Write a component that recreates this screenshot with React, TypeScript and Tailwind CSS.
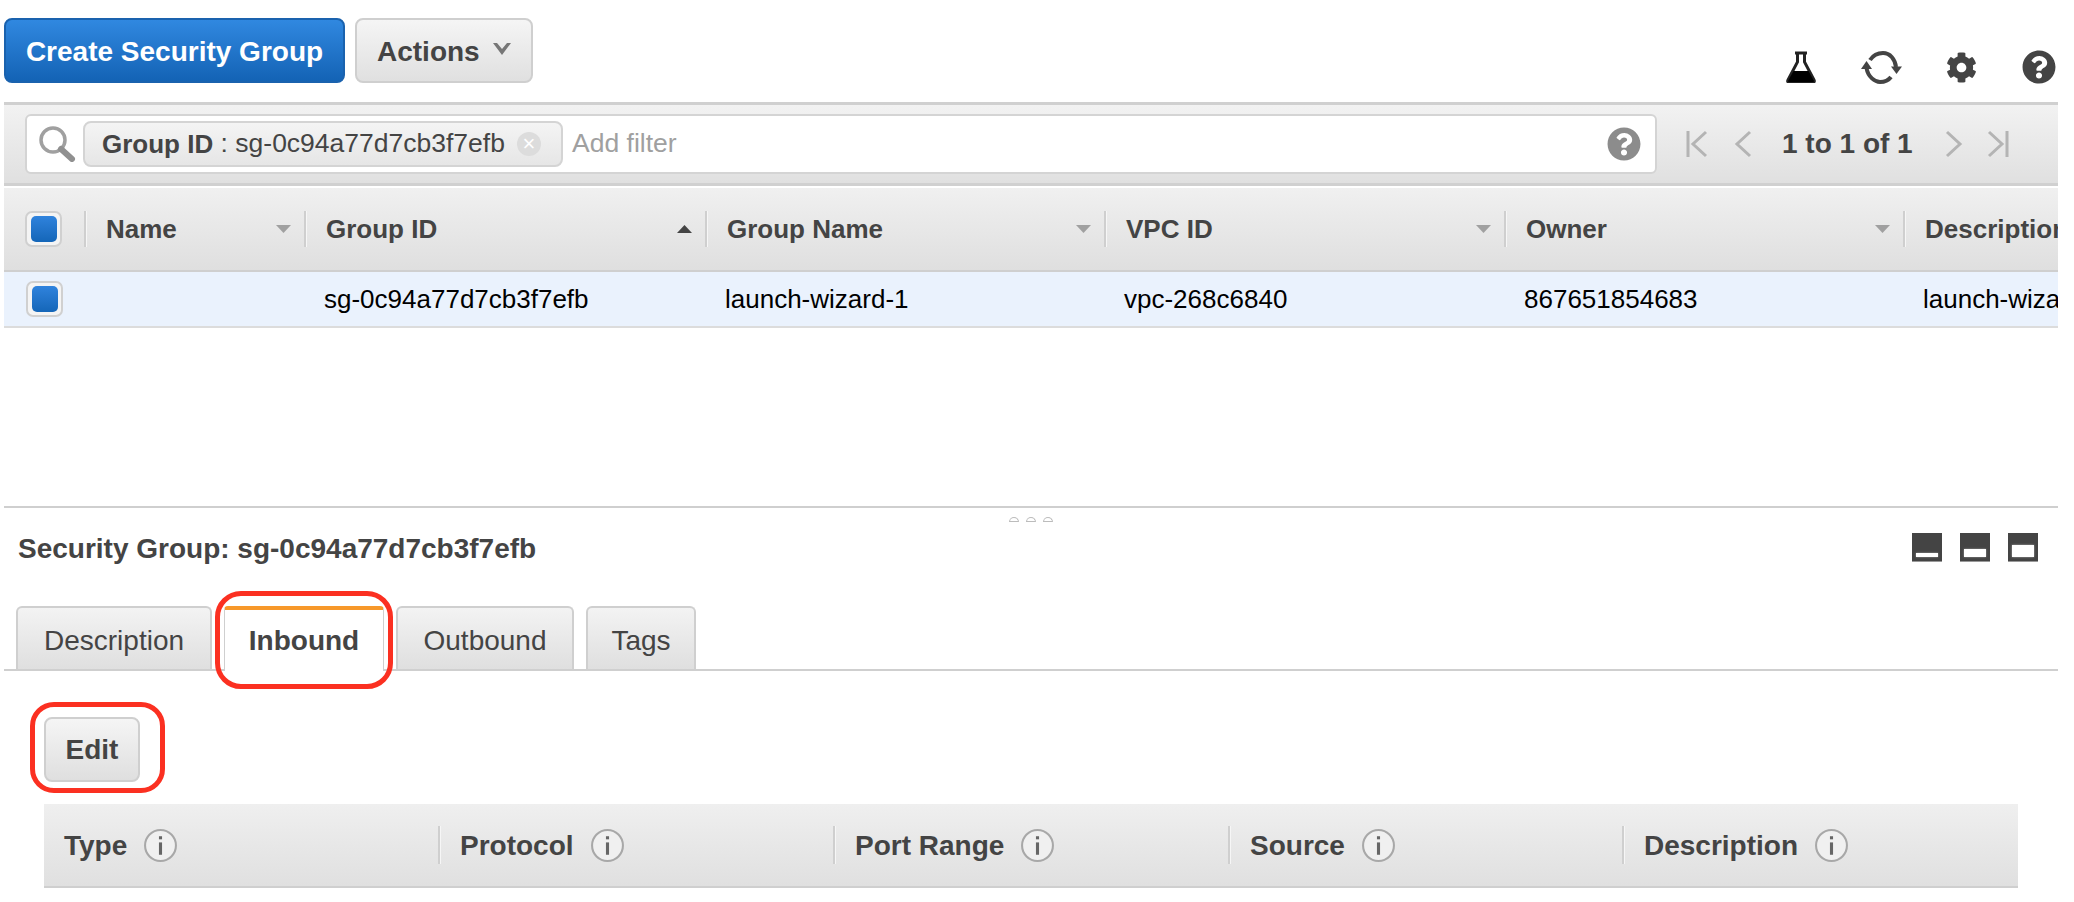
import { FaCog, FaQuestionCircle } from "react-icons/fa";

const mainCols = "grid grid-cols-[80px_220px_401px_399px_400px_399px_155px]";
const ruleCols = "grid grid-cols-[394px_395px_395px_394px_396px]";

const Check = () => (
  <span className="flex h-[36px] w-[37px] items-center justify-center rounded-[7px] border-2 border-[#d0d0d0] bg-[#f4f4f4]">
    <span className="h-[26px] w-[26px] rounded-[5px] bg-gradient-to-b from-[#2f83dd] to-[#1466b8]" />
  </span>
);

const Caret = ({ up }: { up?: boolean }) => (
  <svg width="15" height="8" viewBox="0 0 15 8" className="shrink-0">
    <path d={up ? "M0 8 L7.5 0 L15 8 Z" : "M0 0 L15 0 L7.5 8 Z"} fill={up ? "#444444" : "#a0a0a0"} />
  </svg>
);

const HeadCell = ({ label, up }: { label: string; up?: boolean }) => (
  <div className="flex items-center">
    <span className="h-[36px] w-[2px] shrink-0 bg-[#cfcfcf] shadow-[1px_0_0_#f6f6f6]" />
    <span className="pl-[20px] text-[26px] font-bold whitespace-nowrap text-[#444444]">{label}</span>
    {label !== "Description" && (
      <span className="mr-[13px] ml-auto">
        <Caret up={up} />
      </span>
    )}
  </div>
);

const Info = () => (
  <svg width="35" height="35" viewBox="0 0 33 34" className="ml-[16px] shrink-0">
    <circle cx="16.5" cy="17" r="15" fill="#f0f0f0" stroke="#a8a8a8" strokeWidth="2" />
    <rect x="15" y="14" width="3" height="12" fill="#666666" />
    <rect x="15" y="8" width="3" height="3" fill="#666666" />
  </svg>
);

const RuleHead = ({ label, first }: { label: string; first?: boolean }) => (
  <div className="flex items-center">
    {!first && <span className="h-[38px] w-[2px] shrink-0 bg-[#cfcfcf] shadow-[1px_0_0_#f6f6f6]" />}
    <span className="pt-[2px] pl-[20px] text-[28px] font-bold text-[#444444]">{label}</span>
    <Info />
  </div>
);

const Tab = ({ label, w }: { label: string; w: string }) => (
  <div
    className={`${w} flex h-[63px] items-start justify-center rounded-t-[6px] border-x-2 border-t-2 border-[#cfcfcf] bg-gradient-to-b from-[#f3f3f3] to-[#dfdfdf] pt-[12px] text-[28px] text-[#444444]`}
  >
    {label}
  </div>
);

const PaneIcon = ({ bar }: { bar: string }) => (
  <span className="flex h-[29px] w-[30px] items-end justify-center border-b border-[#999999] bg-[#444444] pb-[4px]">
    <span className={`${bar} w-[22px] bg-white shadow-[0_0_2px_#aaaaaa]`} />
  </span>
);

const Pager = ({ d }: { d: string }) => (
  <svg width="24" height="30" viewBox="0 0 24 30" fill="none" stroke="#b4b4b4" strokeWidth="3">
    <path d={d} />
  </svg>
);

export default function App() {
  return (
    <div className="h-[902px] w-[2074px] overflow-hidden bg-white pr-[16px] pl-[4px] font-['Liberation_Sans',Arial,sans-serif]">
      {/* top buttons */}
      <div className="flex h-[102px] items-start pt-[18px]">
        <button className="h-[65px] w-[341px] rounded-[8px] border-2 border-[#1a62ae] bg-gradient-to-b from-[#3088e0] to-[#1363b5] pt-[3px] text-[28px] font-bold text-white">
          Create Security Group
        </button>
        <button className="ml-[10px] flex h-[65px] w-[178px] items-center rounded-[8px] border-2 border-[#cfcfcf] bg-gradient-to-b from-[#f5f5f5] to-[#e0e0e0] pl-[20px] text-[28px] font-bold text-[#444444]">
          <span className="pt-[3px]">Actions</span>
          <svg width="20" height="14" viewBox="0 0 20 14" className="mb-[4px] ml-[12px]">
            <path d="M1 1 L10 13 L19 1 L15 1 L10 7 L5 1 Z" fill="#777777" />
          </svg>
        </button>
        <div className="mt-[32px] ml-auto flex items-center">
          <svg width="30" height="32" viewBox="0 0 30 32">
            <path d="M9 2 H21 M11.5 2 V11 L2 29 Q1 31 3 31 H27 Q29 31 28 29 L18.5 11 V2" fill="none" stroke="#222222" strokeWidth="3" />
            <path d="M7.5 20 H22.5 L28 30 Q28 31 27 31 H3 Q2 31 2 30 Z" fill="#000000" />
          </svg>
          <svg width="41" height="33" viewBox="0 0 41 33" className="ml-[45px]" fill="none" stroke="#444444" strokeWidth="4">
            <path d="M9 9 C13 3 18 2 22 2 C29 2 34 8 35 16" />
            <path d="M5.5 17 C7 26 14 31 19 31 C23 31 27 30 30 26" />
            <path d="M5.5 10 L11 18 L0 18 Z" fill="#444444" stroke="none" />
            <path d="M35.5 23 L30 15.5 L41 15.5 Z" fill="#444444" stroke="none" />
          </svg>
          <FaCog className="ml-[44px] text-[31px] text-[#444444]" />
          <FaQuestionCircle className="mr-[2px] ml-[45px] text-[34px] text-[#444444]" />
        </div>
      </div>

      {/* filter bar */}
      <div className="flex h-[84px] items-center border-y-[3px] border-[#d0d0d0] bg-gradient-to-b from-[#f2f2f2] to-[#e0e0e0] pl-[21px]">
        <div className="flex h-[60px] w-[1632px] items-center rounded-[6px] border-2 border-[#d4d4d4] bg-white pr-[14px]">
          <svg width="38" height="36" viewBox="0 0 38 36" className="ml-[11px] shrink-0" fill="none">
            <circle cx="15" cy="14" r="12" stroke="#a0a0a0" strokeWidth="3.5" />
            <path d="M23 23 L34 33" stroke="#909090" strokeWidth="6" strokeLinecap="round" />
          </svg>
          <div className="ml-[7px] flex h-[46px] w-[480px] items-center rounded-[8px] border-2 border-[#d4d4d4] bg-gradient-to-b from-[#f4f4f4] to-[#e6e6e6] pl-[17px] text-[26.5px] whitespace-nowrap text-[#444444]">
            <span className="text-[26px] font-bold">Group ID</span>
            <span className="whitespace-pre"> : </span>
            sg-0c94a77d7cb3f7efb
            <span className="ml-[12px] flex h-[24px] w-[24px] shrink-0 items-center justify-center rounded-full bg-[#dcdcdc] text-[22px] leading-none text-white">
              ×
            </span>
          </div>
          <span className="ml-[9px] text-[26.5px] text-[#a0a0a0]">Add filter</span>
          <FaQuestionCircle className="ml-auto text-[34px] text-[#8c8c8c]" />
        </div>
        <div className="ml-[28px] flex items-center">
          <Pager d="M3 2 V28 M21 3 L8 15 L21 27" />
          <span className="ml-[22px]">
            <Pager d="M19 3 L6 15 L19 27" />
          </span>
          <span className="ml-[27px] text-[28px] font-bold whitespace-nowrap text-[#444444]">1 to 1 of 1</span>
          <span className="ml-[29px]">
            <Pager d="M5 3 L18 15 L5 27" />
          </span>
          <span className="ml-[20px]">
            <Pager d="M3 3 L16 15 L3 27 M21 2 V28" />
          </span>
        </div>
      </div>

      {/* security groups table */}
      <div className={`${mainCols} mt-[2px] h-[84px] items-center overflow-hidden border-b-2 border-[#cfcfcf] bg-gradient-to-b from-[#f0f0f0] to-[#dfdfdf]`}>
        <div className="pl-[21px]">
          <Check />
        </div>
        <HeadCell label="Name" />
        <HeadCell label="Group ID" up />
        <HeadCell label="Group Name" />
        <HeadCell label="VPC ID" />
        <HeadCell label="Owner" />
        <HeadCell label="Description" />
      </div>
      <div className={`${mainCols} h-[56px] items-center overflow-hidden border-b-2 border-[#dcdcdc] bg-[#eaf2fd] text-[26px] whitespace-nowrap text-black`}>
        <div className="pl-[22px]">
          <Check />
        </div>
        <div />
        <div className="pl-[20px]">sg-0c94a77d7cb3f7efb</div>
        <div className="pl-[20px]">launch-wizard-1</div>
        <div className="pl-[20px]">vpc-268c6840</div>
        <div className="pl-[20px]">867651854683</div>
        <div className="overflow-hidden pl-[20px]">launch-wizard-1</div>
      </div>

      <div className="h-[178px]" />

      {/* details pane */}
      <div className="relative border-t-[2px] border-[#cfcfcf]">
        <div className="flex justify-center gap-[7px] pt-[9px]">
          <span className="h-[5px] w-[10px] rounded-t-full border border-[#bcbcbc]" />
          <span className="h-[5px] w-[10px] rounded-t-full border border-[#bcbcbc]" />
          <span className="h-[5px] w-[10px] rounded-t-full border border-[#bcbcbc]" />
        </div>
        <div className="mt-[9px] flex h-[36px] items-center pr-[20px] pl-[14px]">
          <span className="text-[28px] font-bold text-[#444444]">Security Group: sg-0c94a77d7cb3f7efb</span>
          <div className="-mt-[3px] ml-auto flex gap-[18px]">
            <PaneIcon bar="h-[4px]" />
            <PaneIcon bar="h-[8px]" />
            <PaneIcon bar="h-[12px]" />
          </div>
        </div>

        <div className="mt-[39px] flex h-[65px] gap-[12px] border-b-2 border-[#cfcfcf] pl-[12px]">
          <Tab label="Description" w="w-[196px]" />
          <div className="-mb-[2px] flex h-[65px] w-[160px] items-start justify-center rounded-t-[4px] border-x border-t-[4px] border-x-[#cfcfcf] border-t-[#f7982a] bg-white pt-[10px] text-[28px] font-bold text-[#444444]">
            Inbound
          </div>
          <Tab label="Outbound" w="w-[178px]" />
          <Tab label="Tags" w="w-[110px]" />
        </div>

        <button className="mt-[46px] ml-[40px] flex h-[65px] w-[96px] items-center justify-center rounded-[8px] border-2 border-[#cfcfcf] bg-gradient-to-b from-[#f5f5f5] to-[#dfdfdf] pt-[1px] text-[28px] font-bold text-[#444444]">
          Edit
        </button>

        <div className={`${ruleCols} mt-[22px] ml-[40px] h-[84px] w-[1974px] items-center border-b-2 border-[#cfcfcf] bg-gradient-to-b from-[#efefef] to-[#e0e0e0]`}>
          <RuleHead label="Type" first />
          <RuleHead label="Protocol" />
          <RuleHead label="Port Range" />
          <RuleHead label="Source" />
          <RuleHead label="Description" />
        </div>

        {/* red annotations */}
        <div className="absolute top-[83px] left-[211px] h-[98px] w-[178px] rounded-[26px] border-[5px] border-[#fb3021]" />
        <div className="absolute top-[194px] left-[26px] h-[91px] w-[135px] rounded-[24px] border-[5px] border-[#fb3021]" />
      </div>
    </div>
  );
}
